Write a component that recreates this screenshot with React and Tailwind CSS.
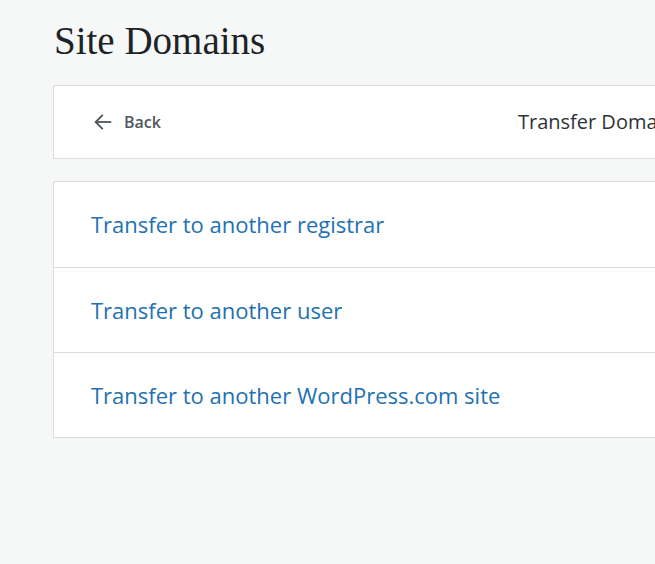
import React from 'react';

const options = [
  'Transfer to another registrar',
  'Transfer to another user',
  'Transfer to another WordPress.com site',
];

export default function App() {
  return (
    <div className="w-[655px] h-[564px] overflow-hidden bg-[#f6f7f7]" style={{ fontFamily: '"Open Sans", "Noto Sans", sans-serif' }}>
      <div className="pl-[53px] pt-[18px]">
        <h1 className="text-[39px] leading-[46px] text-[#1d2327] pl-[1px]" style={{ fontFamily: '"Liberation Serif", "DejaVu Serif", serif' }}>
          Site Domains
        </h1>

        {/* header card */}
        <div className="mt-[21px] w-[1000px] h-[74px] bg-white border border-[#dcdcde] flex items-center">
          <button className="flex items-center gap-[10px] pl-[38px] text-[#50575e] text-[16px] font-semibold">
            <svg width="22" height="22" viewBox="0 0 24 24" fill="none" stroke="currentColor" strokeWidth="2" strokeLinecap="square">
              <path d="M20 12H5" />
              <path d="M11 5l-7 7 7 7" />
            </svg>
            <span>Back</span>
          </button>
          <div className="ml-[357px] text-[20px] text-[#2c3338]">Transfer Domain</div>
        </div>

        {/* options */}
        <div className="mt-[22px] w-[1000px] bg-white border border-[#dcdcde]">
          {options.map((o, i) => (
            <div key={o} className={`h-[85px] flex items-center pl-[37px] ${i > 0 ? 'border-t border-[#dcdcde]' : ''}`}>
              <a className="text-[22px] text-[#2271b1] cursor-pointer">{o}</a>
            </div>
          ))}
        </div>
      </div>
    </div>
  );
}
